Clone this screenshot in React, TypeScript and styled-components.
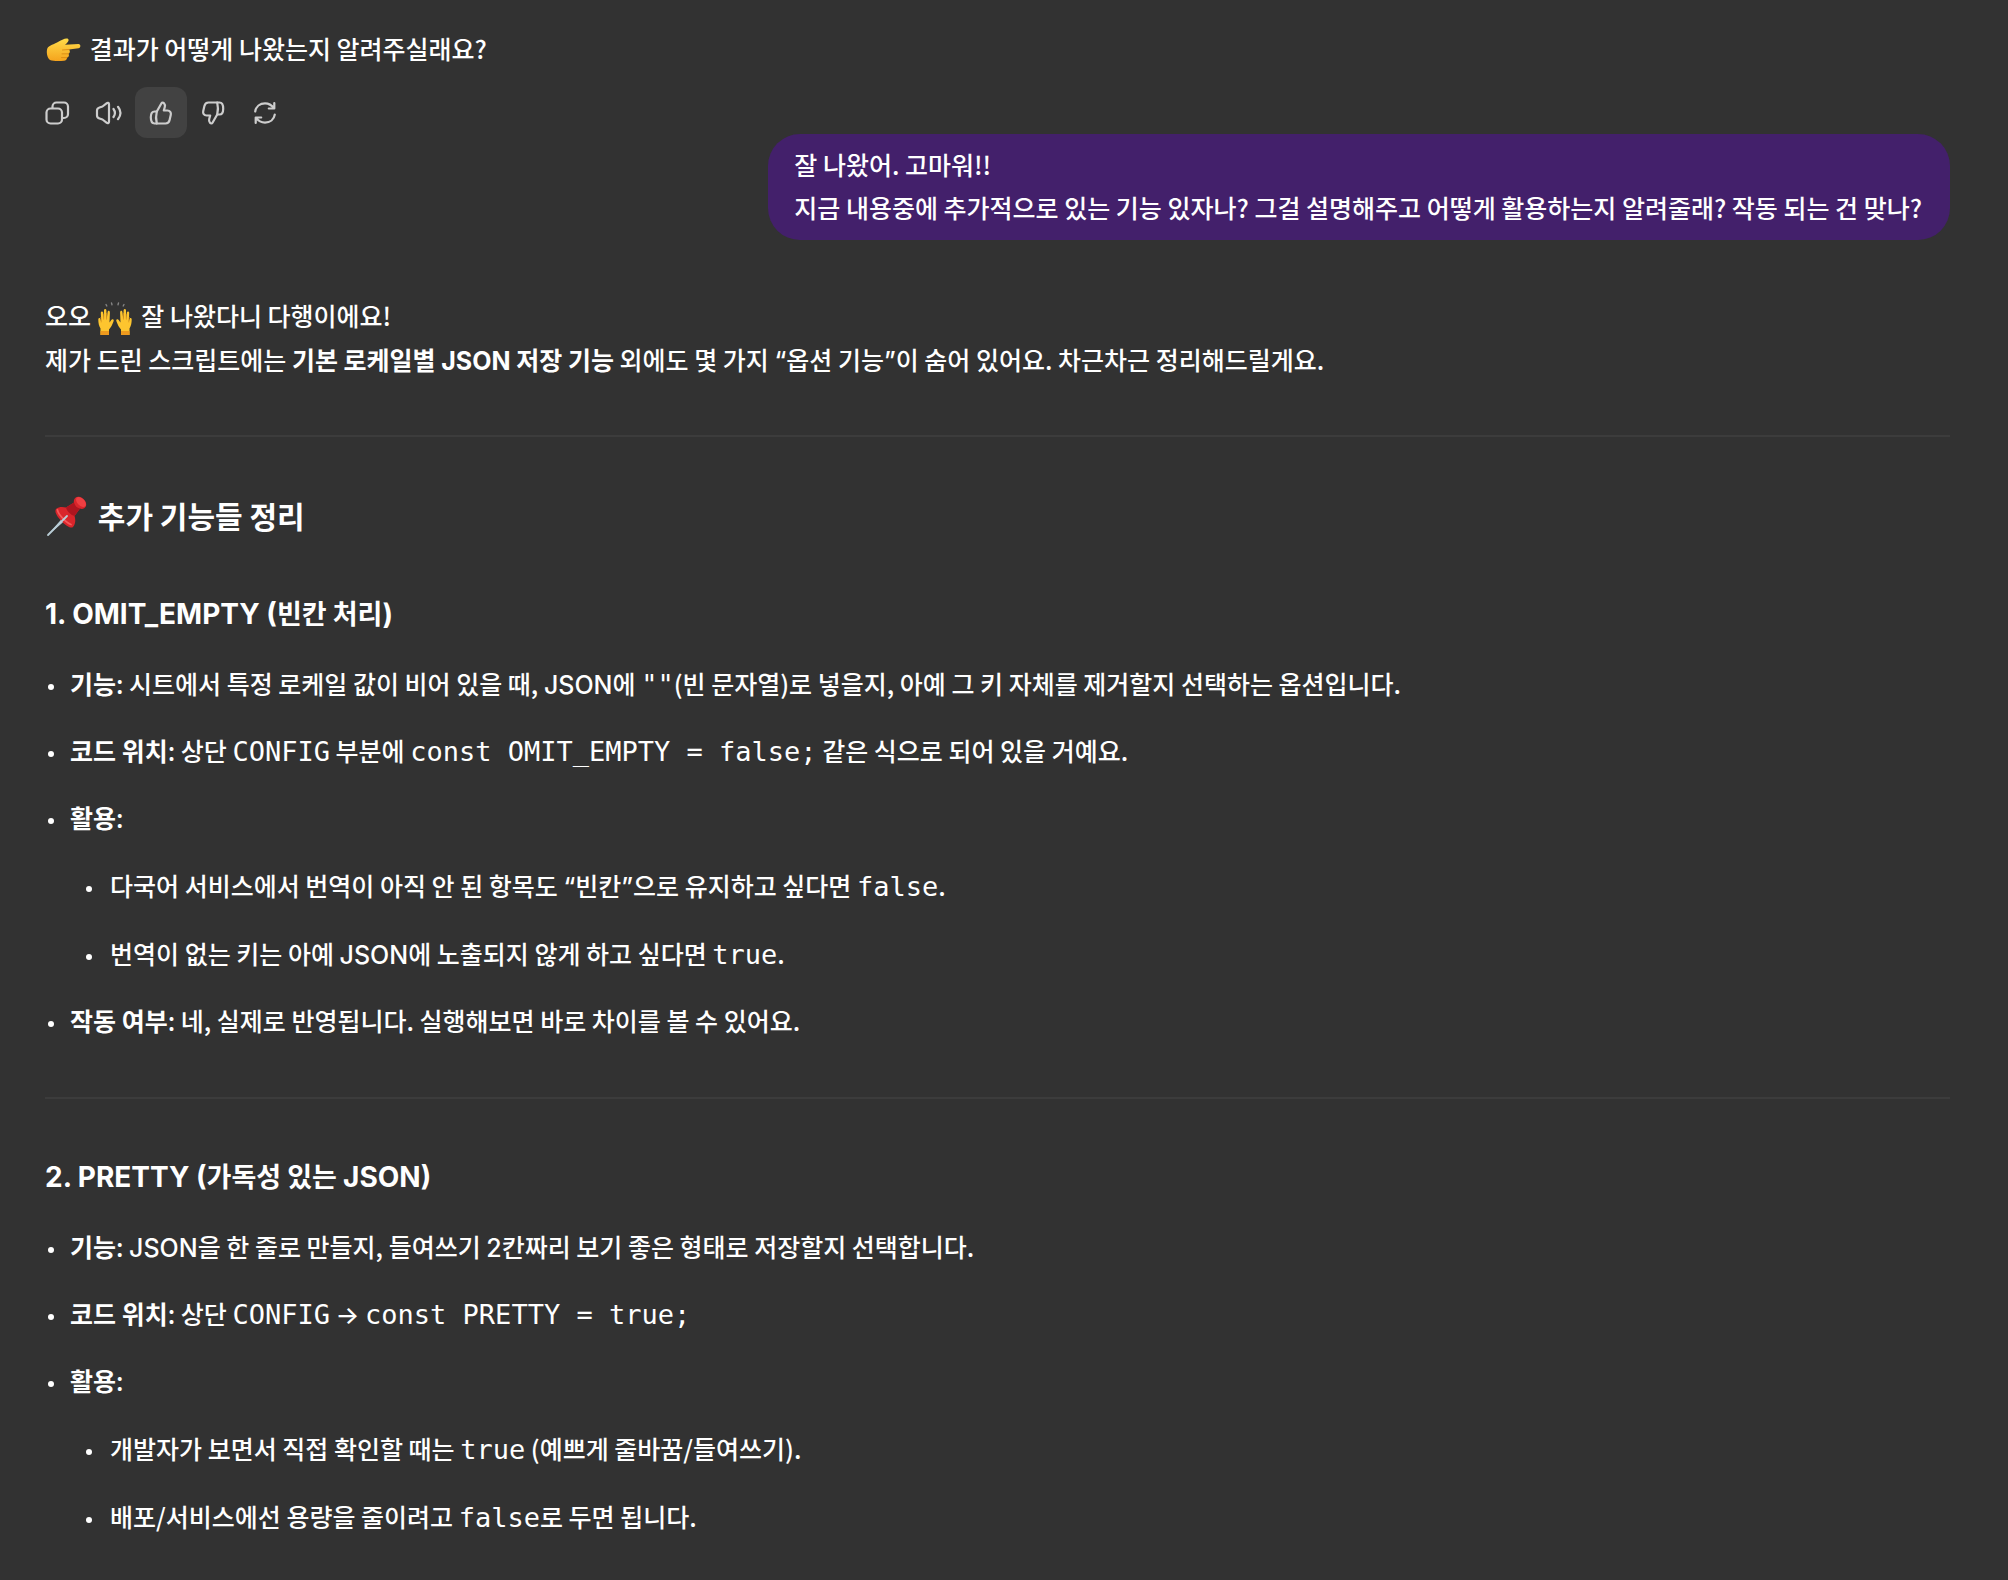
import React from 'react';
import styled, { createGlobalStyle } from 'styled-components';

const GlobalStyle = createGlobalStyle`
  *, *::before, *::after { box-sizing: border-box; }
  body {
    margin: 0;
    background: #323232;
    color: #ffffff;
    font-family: 'Noto Sans CJK KR', sans-serif;
    font-size: 25px;
    font-weight: 500;
    line-height: 44px;
    word-break: keep-all;
  }
`;

const Thread = styled.main`
  padding: 26px 58px 40px 45px;
`;

const Paragraph = styled.p`
  margin: 0;
`;

const Actions = styled.div`
  display: flex;
  margin: 17px 0 -4px -14px;
`;

const IconButton = styled.button<{ $active?: boolean }>`
  display: flex;
  align-items: center;
  justify-content: center;
  width: 52px;
  height: 51px;
  padding: 0;
  border: 0;
  border-radius: 12px;
  background: ${(p) => (p.$active ? '#424242' : 'transparent')};
  color: #cdcdcd;
  cursor: pointer;
`;

const Glyph = styled.svg`
  width: 30px;
  height: 30px;
  fill: none;
  stroke: currentColor;
  stroke-width: 2.2;
  stroke-linecap: round;
  stroke-linejoin: round;
`;

const UserTurn = styled.div`
  display: flex;
  justify-content: flex-end;
`;

const Bubble = styled.div`
  padding: 9px 28px 11px 26px;
  border-radius: 32px;
  background: #43206b;
  line-height: 43px;
`;

const Reply = styled.article`
  padding-top: 53px;
`;

const Divider = styled.hr`
  height: 2px;
  margin: 54px 0 56px;
  border: 0;
  background: #3c3c3c;
`;

const Title = styled.h2`
  margin: 0;
  font-size: 30px;
  font-weight: 700;
`;

const Section = styled.section`
  & + hr { margin: 55px 0; }
`;

const Latin = styled.span`
  font-family: Inter, sans-serif;
  line-height: 1;
`;

const Subtitle = styled.h3`
  margin: 0 0 26px;
  font-size: 27px;
  font-weight: 700;

  ${Title} + ${Section} & { margin-top: 53px; }
  ${Latin} { font-size: 28px; }
`;

const List = styled.ul<{ $nested?: boolean }>`
  display: flex;
  flex-direction: column;
  gap: ${(p) => (p.$nested ? 24 : 23)}px;
  margin: ${(p) => (p.$nested ? 24 : 0)}px 0 0;
  padding: 0 0 0 ${(p) => (p.$nested ? 40 : 25)}px;
  list-style: none;
`;

const Item = styled.li`
  &::before {
    content: '';
    display: inline-block;
    width: 6px;
    height: 6px;
    margin: 0 16px 0 -22px;
    border-radius: 50%;
    background: #ffffff;
    vertical-align: middle;
  }

  & &::before { margin: 0 18px 0 -24px; }
`;

const Code = styled.code`
  font-family: 'DejaVu Sans Mono', monospace;
  font-size: 27px;
  font-weight: 400;
  line-height: 1;
`;

const EmojiArt = styled.svg<{ $size: number }>`
  display: inline-block;
  width: ${(p) => p.$size}px;
  height: ${(p) => p.$size}px;
  margin-right: ${(p) => (p.$size > 36 ? 2 : 3)}px;
  vertical-align: -10px;
`;

const PointingHand = () => (
  <EmojiArt $size={36} viewBox="0 0 36 36" role="img" aria-label="👉">
    <defs>
      <linearGradient id="point" x1="0" y1="0" x2="0" y2="1">
        <stop offset="0" stopColor="#ffdc4a" />
        <stop offset="1" stopColor="#f5a31c" />
      </linearGradient>
    </defs>
    <path
      d="M2.500 15C4.500 12 9 11.500 13 9C16 7.200 20.500 4.800 22.500 5.600C24.500 6.600 23.500 8.800 21.500 10.500L20 11.800L33.500 11C36 11.200 36 15 33.500 15.200L24 16.500C25.500 18.200 25 20.200 23.500 20.800C24.500 22.500 23.800 24.200 22 24.600C22.200 26.500 20.800 27.800 19 27.800C14 28.300 8 28.300 5 27C2 25 1 18.500 2.500 15Z"
      fill="url(#point)"
    />
    <path d="M24 16.500L17.500 17M23.500 20.800L17 20.900M22 24.600L16.500 24.600" stroke="#d98a12" strokeWidth="0.900" fill="none" strokeLinecap="round" />
  </EmojiArt>
);

const Hand = () => (
  <>
    <path
      d="M3.500 35V28.500C2 26 1.300 23 1.300 19.500C1.200 17.500 3.300 17.300 3.600 19.500L4.200 22L3.800 13C3.800 11 6 11 6.200 13L6.800 20L7 10.500C7 8.500 9.300 8.500 9.400 10.500L9.600 20L10.600 12C10.900 10 13 10.400 12.900 12.500L12.500 22.500C13.500 21 14.300 19.500 15.200 19.200C16.800 18.800 17 20.300 16.500 21.500C15.300 24.500 14 27.500 12 29.500V35Z"
      fill="#fdc52f"
    />
    <path d="M3.500 31H12V35H3.500Z" fill="#ee9a1d" />
    <path d="M6.700 19.500L6.900 14M9.600 19.500V13M4.200 22.500L3.900 17" stroke="#e59a1c" strokeWidth="0.700" fill="none" />
  </>
);

const RaisedHands = () => (
  <EmojiArt $size={36} viewBox="0 0 36 36" role="img" aria-label="🙌">
    <Hand />
    <g transform="translate(36 0) scale(-1 1)">
      <Hand />
    </g>
    <path d="M9 4.500L9.800 6M14.500 3L15 4.800M21.500 3L21 4.800M27 4.500L26.200 6" stroke="#858585" strokeWidth="1.400" fill="none" strokeLinecap="round" />
  </EmojiArt>
);

const Pushpin = () => (
  <EmojiArt $size={44} viewBox="0 0 44 44" role="img" aria-label="📌">
    <path d="M3 41L19 22L22 25Z" fill="#9fb4c0" />
    <path d="M11 15C14 12.500 18 13 21 13.500L29 8.500C28 5 31 2 35 3C39 4.500 42 8 41 12C40 14.500 37 15.500 35 14.500L29.500 22C30.500 25 31 29 28 33C25.500 35 20 31 16.500 27C12.500 23 9 18 11 15Z" fill="#d9252b" />
    <path d="M21 13.500L29 8.500C30 12 32 14 35 14.500L29.500 22C26 21 22 17.500 21 13.500Z" fill="#ad151f" />
    <ellipse cx="36" cy="8" rx="6" ry="3.600" transform="rotate(45 36 8)" fill="#ee3f42" />
    <path d="M12.500 16C13 20 21 29 26 30.500" stroke="#f4595a" strokeWidth="1.800" fill="none" strokeLinecap="round" />
    <path d="M3 41L22 22" stroke="#b9cdd6" strokeWidth="1.800" strokeLinecap="round" />
  </EmojiArt>
);

const CopyIcon = () => (
  <Glyph viewBox="0 0 30 30">
    <rect x="4.500" y="10.500" width="15.500" height="15" rx="4" />
    <path d="M10.500 10V8.500A4 4 0 0 1 14.500 4.500H22A4 4 0 0 1 26 8.500V16A4 4 0 0 1 22 20H20.500" />
  </Glyph>
);

const SpeakerIcon = () => (
  <Glyph viewBox="0 0 30 30">
    <path d="M15 6.200V23.800C15 25.300 13.600 25.600 12.500 24.700L8.500 21.500L5.500 20.500C3.900 20 3 19 3 17.500V12.500C3 11 3.900 10 5.500 9.500L8.500 8.500L12.500 5.300C13.600 4.400 15 4.700 15 6.200Z" />
    <path d="M19.500 11C21.300 13.500 21.300 16.500 19.500 19M24 8.800C27.200 12.800 27.200 17.200 24 21.200" />
  </Glyph>
);

const thumbPaths = (
  <>
    <path d="M10.500 25.500H8.500C6 25.500 4.800 22.500 4.800 19.300C4.800 16 6 13.500 8.500 13.500H10.800L15.500 5.200C16 4.300 17.200 4.300 18 5.200C19 6.300 19.200 7.500 18.800 9L17.800 12.500H21.500C24 12.500 25.300 14.500 24.800 16.800L23.600 22C23.100 24.200 21.800 25.500 19.500 25.500Z" />
    <path d="M10.800 13.500C9.800 17.500 9.800 21.500 10.800 25.500" />
  </>
);

const ThumbUpIcon = () => <Glyph viewBox="0 0 30 30">{thumbPaths}</Glyph>;

const ThumbDownIcon = () => (
  <Glyph viewBox="0 0 30 30">
    <g transform="rotate(180 15 15)">{thumbPaths}</g>
  </Glyph>
);

const RetryIcon = () => (
  <Glyph viewBox="0 0 30 30">
    <path d="M5.200 13.500C6 8.500 10 5.300 15 5.300C18.800 5.300 21.800 7.200 24 10.300M24.300 5V10.500H18.800" />
    <path d="M24.800 16.500C24 21.500 20 24.700 15 24.700C11.200 24.700 8.200 22.800 6 19.700M5.700 25V19.500H11.200" />
  </Glyph>
);

const actions = [
  { label: '복사', Icon: CopyIcon },
  { label: '소리 내어 읽기', Icon: SpeakerIcon },
  { label: '좋은 응답', Icon: ThumbUpIcon, active: true },
  { label: '별로인 응답', Icon: ThumbDownIcon },
  { label: '다시 시도', Icon: RetryIcon },
];

export default function App() {
  return (
    <>
      <GlobalStyle />
      <Thread>
        <Paragraph>
          <PointingHand /> 결과가 어떻게 나왔는지 알려주실래요?
        </Paragraph>
        <Actions>
          {actions.map(({ label, Icon, active }) => (
            <IconButton key={label} type="button" aria-label={label} $active={active}>
              <Icon />
            </IconButton>
          ))}
        </Actions>

        <UserTurn>
          <Bubble>
            잘 나왔어. 고마워!!
            <br />
            지금 내용중에 추가적으로 있는 기능 있자나? 그걸 설명해주고 어떻게 활용하는지 알려줄래? 작동 되는 건 맞나?
          </Bubble>
        </UserTurn>

        <Reply>
          <Paragraph>
            오오 <RaisedHands /> 잘 나왔다니 다행이에요!
            <br />
            제가 드린 스크립트에는 <strong>기본 로케일별 <Latin>JSON</Latin> 저장 기능</strong> 외에도 몇 가지 <Latin>“</Latin>옵션 기능<Latin>”</Latin>이 숨어 있어요. 차근차근 정리해드릴게요.
          </Paragraph>

          <Divider />

          <Title>
            <Pushpin /> 추가 기능들 정리
          </Title>

          <Section>
            <Subtitle>
              <Latin>1. OMIT_EMPTY (</Latin>빈칸 처리<Latin>)</Latin>
            </Subtitle>
            <List>
              <Item>
                <strong>기능</strong>: 시트에서 특정 로케일 값이 비어 있을 때, <Latin>JSON</Latin>에 <Code>""</Code>(빈 문자열)로 넣을지, 아예 그 키 자체를 제거할지 선택하는 옵션입니다.
              </Item>
              <Item>
                <strong>코드 위치</strong>: 상단 <Code>CONFIG</Code> 부분에 <Code>const OMIT_EMPTY = false;</Code> 같은 식으로 되어 있을 거예요.
              </Item>
              <Item>
                <strong>활용</strong>:
                <List $nested>
                  <Item>
                    다국어 서비스에서 번역이 아직 안 된 항목도 <Latin>“</Latin>빈칸<Latin>”</Latin>으로 유지하고 싶다면 <Code>false</Code>.
                  </Item>
                  <Item>
                    번역이 없는 키는 아예 <Latin>JSON</Latin>에 노출되지 않게 하고 싶다면 <Code>true</Code>.
                  </Item>
                </List>
              </Item>
              <Item>
                <strong>작동 여부</strong>: 네, 실제로 반영됩니다. 실행해보면 바로 차이를 볼 수 있어요.
              </Item>
            </List>
          </Section>

          <Divider />

          <Section>
            <Subtitle>
              <Latin>2. PRETTY (</Latin>가독성 있는 <Latin>JSON)</Latin>
            </Subtitle>
            <List>
              <Item>
                <strong>기능</strong>: <Latin>JSON</Latin>을 한 줄로 만들지, 들여쓰기 <Latin>2</Latin>칸짜리 보기 좋은 형태로 저장할지 선택합니다.
              </Item>
              <Item>
                <strong>코드 위치</strong>: 상단 <Code>CONFIG</Code> <Latin>→</Latin> <Code>const PRETTY = true;</Code>
              </Item>
              <Item>
                <strong>활용</strong>:
                <List $nested>
                  <Item>
                    개발자가 보면서 직접 확인할 때는 <Code>true</Code> (예쁘게 줄바꿈/들여쓰기).
                  </Item>
                  <Item>
                    배포/서비스에선 용량을 줄이려고 <Code>false</Code>로 두면 됩니다.
                  </Item>
                </List>
              </Item>
            </List>
          </Section>
        </Reply>
      </Thread>
    </>
  );
}
